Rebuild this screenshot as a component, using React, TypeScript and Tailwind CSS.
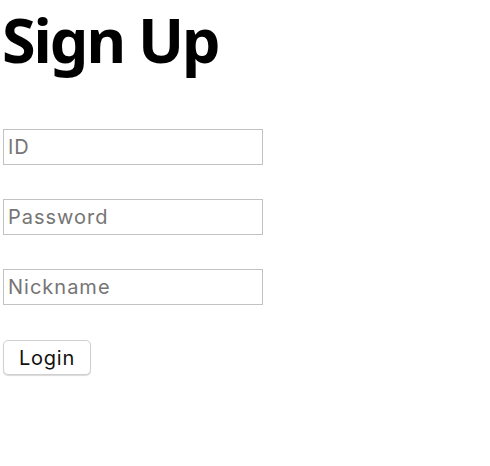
import { useState } from "react";

const SignUp = () => {
  const [form, setForm] = useState({ id: "", password: "", nickname: "" });

  const inputClass =
    "w-[260px] h-[36px] px-[4px] border border-[#c2c2c2] bg-white text-[20px] tracking-[1px] text-black placeholder:text-[#757575] outline-none";

  return (
    <div className="min-h-screen bg-white font-['Inter',sans-serif]">
      <h1 className="pl-[2px] font-['Noto_Sans',sans-serif] text-[61px] font-bold tracking-[-2px] leading-[79px] text-black">
        Sign Up
      </h1>

      <div className="flex flex-col gap-[34px] pl-[3px] pt-[50px]">
        <input
          type="text"
          placeholder="ID"
          className={inputClass}
          value={form.id}
          onChange={(e) => setForm((prev) => ({ ...prev, id: e.target.value }))}
        />
        <input
          type="password"
          placeholder="Password"
          className={inputClass}
          value={form.password}
          onChange={(e) =>
            setForm((prev) => ({ ...prev, password: e.target.value }))
          }
        />
        <input
          type="text"
          placeholder="Nickname"
          className={inputClass}
          value={form.nickname}
          onChange={(e) =>
            setForm((prev) => ({ ...prev, nickname: e.target.value }))
          }
        />
        <div className="pt-px">
          <button className="w-[88px] h-[35px] rounded-[5px] border border-[#d0d0d0] bg-white text-[20px] tracking-[0.8px] text-[#111] shadow-[0_1px_1px_rgba(0,0,0,0.15)]">
            Login
          </button>
        </div>
      </div>
    </div>
  );
};

export default function App() {
  return <SignUp />;
}
